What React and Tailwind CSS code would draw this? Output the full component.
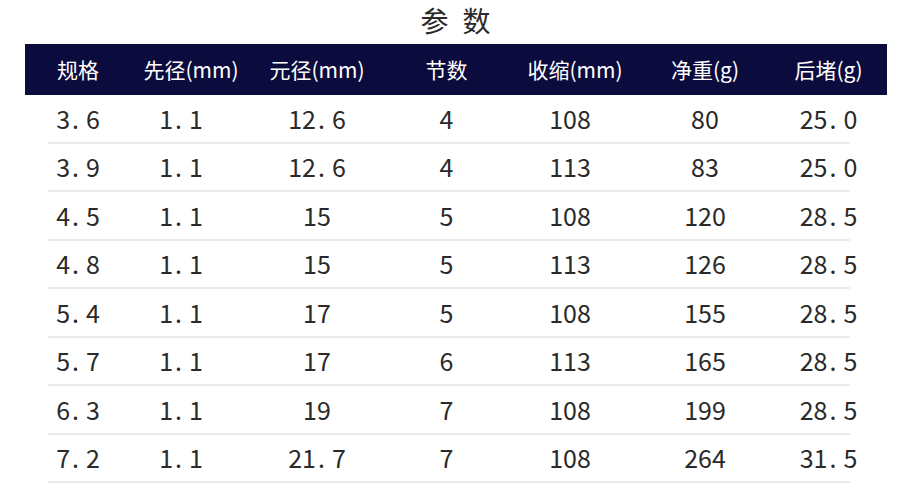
import React from "react";

const cols = "grid grid-cols-[106px_120px_132px_127px_130px_130px_117px]";

const headers = ["规格", "先径(mm)", "元径(mm)", "节数", "收缩(mm)", "净重(g)", "后堵(g)"];

const rows = [
    ["3.6", "1.1", "12.6", "4", "108", "80", "25.0"],
    ["3.9", "1.1", "12.6", "4", "113", "83", "25.0"],
    ["4.5", "1.1", "15", "5", "108", "120", "28.5"],
    ["4.8", "1.1", "15", "5", "113", "126", "28.5"],
    ["5.4", "1.1", "17", "5", "108", "155", "28.5"],
    ["5.7", "1.1", "17", "6", "113", "165", "28.5"],
    ["6.3", "1.1", "19", "7", "108", "199", "28.5"],
    ["7.2", "1.1", "21.7", "7", "108", "264", "31.5"],
];

// nudges so each data column sits where the picture has it
const shift = ["", "pr-[20px]", "", "", "pr-[10px]", "", ""];

// the source picture sets the decimal point with a wider gap after it
const Num = ({ value }) => {
    const [a, b] = value.split(".");
    if (b === undefined) return <span>{a}</span>;
    return (
        <span>
            {a}
            <span className="ml-[2px] mr-[7px]">.</span>
            {b}
        </span>
    );
};

const App = () => {
    return (
        <div className="w-[907px] h-[500px] bg-white overflow-hidden font-['Noto_Sans_CJK_SC','Noto_Sans',sans-serif]">
            <div className="h-[44px] flex items-center justify-center pb-[4px] pl-[18px] text-[28px] text-[#2a2a2a] tracking-[14px]">
                参数
            </div>
            <div className="mx-[25px] w-[862px]">
                <div className={`${cols} h-[51px] items-center bg-[#0c0b3d] text-white text-[21px]`}>
                    {headers.map((h, i) => (
                        <div key={i} className="text-center">{h}</div>
                    ))}
                </div>
                {rows.map((r, i) => (
                    <div key={i}>
                        <div className={`${cols} h-[46.5px] items-center text-[25px] text-[#2a2a2a]`}>
                            {r.map((v, j) => (
                                <div key={j} className={`text-center ${shift[j]}`}>
                                    <Num value={v} />
                                </div>
                            ))}
                        </div>
                        <div className="h-[2px] ml-[23px] mr-[37px] bg-[#ebebeb]" />
                    </div>
                ))}
            </div>
        </div>
    );
};

export default App;
